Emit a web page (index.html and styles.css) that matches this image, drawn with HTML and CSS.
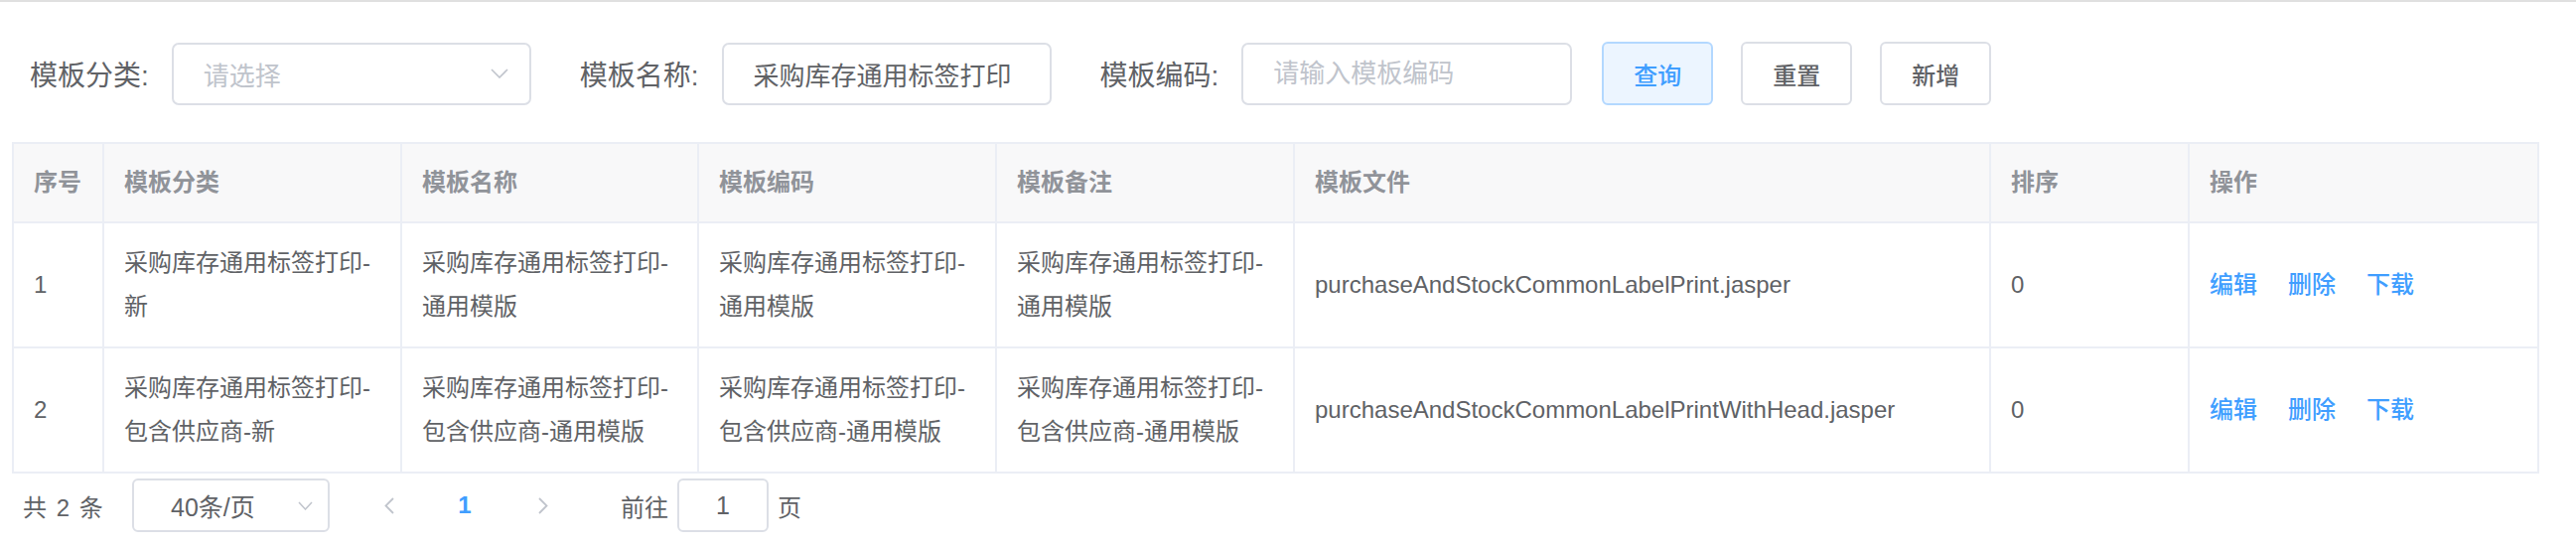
FILE: index.html
```html
<!DOCTYPE html>
<html lang="zh-CN">
<head>
    <meta charset="UTF-8">
    <meta name="viewport" content="width=device-width, initial-scale=1.0">
    <title>打印模板管理</title>
    <link rel="stylesheet" href="styles.css">
</head>
<body>

<div class="topbar"></div>

<form class="search-form">
    <div class="form-item">
        <label class="form-label">模板分类:</label>
        <div class="select">
            <span class="placeholder">请选择</span>
            <svg class="arrow" width="18" height="10" viewBox="0 0 18 10"><polyline points="1,1 9,9 17,1" fill="none" stroke="#c0c4cc" stroke-width="1.6"/></svg>
        </div>
    </div>
    <div class="form-item">
        <label class="form-label" for="name">模板名称:</label>
        <input class="input" type="text" id="name" value="采购库存通用标签打印">
    </div>
    <div class="form-item last">
        <label class="form-label" for="code">模板编码:</label>
        <input class="input code" type="text" id="code" placeholder="请输入模板编码">
    </div>
    <button type="button" class="btn btn-primary">查询</button>
    <button type="button" class="btn">重置</button>
    <button type="button" class="btn">新增</button>
</form>

<table class="grid">
    <thead>
        <tr>
            <th class="c-no">序号</th>
            <th class="c-type">模板分类</th>
            <th class="c-name">模板名称</th>
            <th class="c-code">模板编码</th>
            <th class="c-note">模板备注</th>
            <th class="c-file">模板文件</th>
            <th class="c-sort">排序</th>
            <th class="c-ops">操作</th>
        </tr>
    </thead>
    <tbody>
        <tr>
            <td>1</td>
            <td>采购库存通用标签打印-新</td>
            <td>采购库存通用标签打印-通用模版</td>
            <td>采购库存通用标签打印-通用模版</td>
            <td>采购库存通用标签打印-通用模版</td>
            <td>purchaseAndStockCommonLabelPrint.jasper</td>
            <td>0</td>
            <td><a class="link">编辑</a><a class="link">删除</a><a class="link">下载</a></td>
        </tr>
        <tr>
            <td>2</td>
            <td>采购库存通用标签打印-包含供应商-新</td>
            <td>采购库存通用标签打印-包含供应商-通用模版</td>
            <td>采购库存通用标签打印-包含供应商-通用模版</td>
            <td>采购库存通用标签打印-包含供应商-通用模版</td>
            <td>purchaseAndStockCommonLabelPrintWithHead.jasper</td>
            <td>0</td>
            <td><a class="link">编辑</a><a class="link">删除</a><a class="link">下载</a></td>
        </tr>
    </tbody>
</table>

<div class="pager">
    <span class="total">共 2 条</span>
    <div class="sizes">
        <span>40条/页</span>
        <svg class="arrow" width="15" height="9" viewBox="0 0 15 9"><polyline points="1,1 7.5,8 14,1" fill="none" stroke="#c0c4cc" stroke-width="1.5"/></svg>
    </div>
    <span class="pager-btn prev">
        <svg width="10" height="17" viewBox="0 0 10 17"><polyline points="9,1 1.5,8.5 9,16" fill="none" stroke="#c0c4cc" stroke-width="1.8"/></svg>
    </span>
    <span class="pager-num">1</span>
    <span class="pager-btn next">
        <svg width="10" height="17" viewBox="0 0 10 17"><polyline points="1,1 8.5,8.5 1,16" fill="none" stroke="#c0c4cc" stroke-width="1.8"/></svg>
    </span>
    <span class="jump">前往</span>
    <input class="jump-input" type="text" value="1">
    <span class="jump-unit">页</span>
</div>

</body>
</html>
```

FILE: styles.css
```css
body {
    margin: 0;
    font-family: "Liberation Sans", "Noto Sans CJK SC", sans-serif;
    color: #606266;
    background-color: #fff;
}

.topbar {
    height: 2px;
    background-color: #e0e0e0;
}

/* search bar */
.search-form {
    display: flex;
    align-items: center;
    height: 64px;
    margin: 40px 0 0;
    padding-left: 30px;
}

.form-item {
    display: flex;
    align-items: center;
    margin-right: 49px;
}

.form-item.last {
    margin-right: 30px;
}

.form-label {
    font-size: 28px;
    margin-right: 23px;
    color: #606266;
}

.select {
    display: flex;
    align-items: center;
    width: 362px;
    height: 63px;
    box-sizing: border-box;
    border: 2px solid #dcdfe6;
    border-radius: 7px;
    padding: 0 21px 0 30px;
    font-size: 26px;
}

.placeholder {
    color: #c0c4cc;
}

.select .arrow {
    margin-left: auto;
}

.input {
    width: 332px;
    height: 63px;
    box-sizing: border-box;
    border: 2px solid #dcdfe6;
    border-radius: 7px;
    padding: 0 30px;
    font-family: inherit;
    font-size: 26px;
    color: #606266;
    outline: none;
}

.input.code {
    width: 333px;
}

.input::placeholder {
    color: #c0c4cc;
}

.btn {
    height: 64px;
    box-sizing: border-box;
    padding: 0 30px;
    margin-right: 28px;
    border: 2px solid #dcdfe6;
    border-radius: 6px;
    background-color: #fff;
    color: #606266;
    font-family: inherit;
    font-size: 24px;
    font-weight: 500;
    cursor: pointer;
}

.btn-primary {
    background-color: #ecf5ff;
    border-color: #b3d8ff;
    color: #409eff;
}

/* table */
.grid {
    margin: 37px 0 0 12px;
    width: 2545px;
    table-layout: fixed;
    border-collapse: separate;
    border-spacing: 0;
    border-top: 2px solid #ebeef5;
    border-left: 2px solid #ebeef5;
    font-size: 24px;
    line-height: 44px;
}

.grid th,
.grid td {
    box-sizing: border-box;
    border-right: 2px solid #ebeef5;
    border-bottom: 2px solid #ebeef5;
    padding: 18px 20px;
    text-align: left;
    vertical-align: middle;
}

.grid th {
    padding: 17px 20px;
    background-color: #f8f8f9;
    color: #909399;
    font-weight: 600;
}

.c-no { width: 91px; }
.c-type { width: 300px; }
.c-name { width: 299px; }
.c-code { width: 300px; }
.c-note { width: 300px; }
.c-file { width: 701px; }
.c-sort { width: 200px; }
.c-ops { width: 352px; }

.link {
    color: #409eff;
    font-weight: 500;
    margin-right: 31px;
    cursor: pointer;
}

/* pagination */
.pager {
    display: flex;
    align-items: center;
    height: 54px;
    margin-top: 5px;
    padding-left: 23px;
    font-size: 24px;
}

.total {
    width: 110px;
    word-spacing: 3px;
}

.sizes {
    display: flex;
    align-items: center;
    width: 199px;
    height: 54px;
    box-sizing: border-box;
    border: 2px solid #dcdfe6;
    border-radius: 6px;
    padding: 0 15px 0 37px;
    font-size: 25px;
}

.sizes .arrow {
    margin-left: auto;
}

.pager-btn {
    display: flex;
    justify-content: center;
    width: 52px;
}

.prev {
    margin-left: 34px;
}

.pager-num {
    width: 52px;
    margin-left: 24px;
    text-align: center;
    color: #409eff;
    font-weight: bold;
}

.next {
    margin-left: 27px;
}

.jump {
    margin-left: 52px;
}

.jump-input {
    width: 92px;
    height: 54px;
    box-sizing: border-box;
    margin-left: 9px;
    border: 2px solid #dcdfe6;
    border-radius: 6px;
    text-align: center;
    font-family: inherit;
    font-size: 25px;
    color: #606266;
    outline: none;
}

.jump-unit {
    margin-left: 9px;
}
```
